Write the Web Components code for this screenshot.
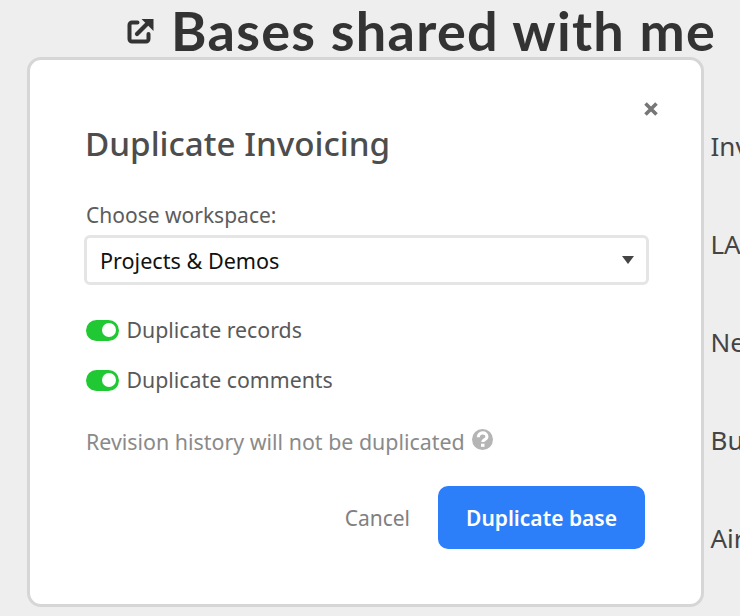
<!DOCTYPE html>
<html>
<head>
<meta charset="utf-8">
<style>
  html, body { margin: 0; height: 100%; overflow: hidden; background: #eeeeee; }
</style>
</head>
<body>
<shared-page>
  <base-row>Inv</base-row>
  <base-row>LA</base-row>
  <base-row>Ne</base-row>
  <base-row>Bu</base-row>
  <base-row>Air</base-row>
  <duplicate-dialog slot="dialog" name="Invoicing" workspace="Projects &amp; Demos"></duplicate-dialog>
</shared-page>

<script>
class SharedPage extends HTMLElement {
  constructor() {
    super();
    this.shadowDOM = this.attachShadow({ mode: "open" });
  }

  connectedCallback() {
    this.shadowDOM.innerHTML = `
      <style>
        :host {
          display: block;
          position: relative;
          width: 740px;
          height: 616px;
          overflow: hidden;
          background: #eeeeee;
          color: #333333;
        }
        header {
          display: flex;
          align-items: center;
          height: 61px;
          padding-left: 126px;
          white-space: nowrap;
        }
        header svg { flex: none; margin-right: 17px; }
        h1 {
          margin: 0;
          font: 700 54px/61px Lato, "Noto Sans", sans-serif;
          letter-spacing: 1.3px;
          color: #333333;
        }
        .list {
          display: flex;
          flex-direction: column;
          padding: 66px 0 0 710.500px;
          gap: 60px;
          white-space: nowrap;
        }
      </style>
      <header>
        <svg width="28" height="28" viewBox="0 0 28 28" fill="none" stroke="#333" stroke-width="4">
          <path d="M11.500 5.500H6A2.500 2.500 0 0 0 3.500 8V22A2.500 2.500 0 0 0 6 24.500H20A2.500 2.500 0 0 0 22.500 22V17" stroke-linecap="round"/>
          <path d="M11 17L20.500 7.500" stroke-width="4.200" stroke-linecap="round"/>
          <path d="M15.500 2H27.500V14Z" fill="#333" stroke="none"/>
        </svg>
        <h1>Bases shared with me</h1>
      </header>
      <div class="list"><slot></slot></div>
      <slot name="dialog"></slot>
    `;
  }
}

class BaseRow extends HTMLElement {
  constructor() {
    super();
    this.shadowDOM = this.attachShadow({ mode: "open" });
  }

  connectedCallback() {
    this.shadowDOM.innerHTML = `
      <style>
        :host {
          display: block;
          font: 400 26px/38px "Noto Sans", "Open Sans", sans-serif;
          color: #444444;
        }
      </style>
      <slot></slot>
    `;
  }
}

class ToggleRow extends HTMLElement {
  constructor() {
    super();
    this.shadowDOM = this.attachShadow({ mode: "open" });
  }

  connectedCallback() {
    this.shadowDOM.innerHTML = `
      <style>
        :host {
          display: flex;
          align-items: center;
          gap: 7.500px;
          height: 30px;
          font: 400 21.300px/30px "Noto Sans", "Open Sans", sans-serif;
          color: #595959;
        }
        .track {
          display: flex;
          justify-content: flex-end;
          align-items: center;
          box-sizing: border-box;
          width: 33px;
          height: 21px;
          padding-right: 3px;
          border-radius: 11px;
          background: #20c933;
        }
        .knob {
          width: 14px;
          height: 14px;
          border-radius: 50%;
          background: #ffffff;
        }
      </style>
      <span class="track"><span class="knob"></span></span>
      <slot></slot>
    `;
  }
}

class DuplicateDialog extends HTMLElement {
  constructor() {
    super();
    this.shadowDOM = this.attachShadow({ mode: "open" });
  }

  connectedCallback() {
    const name = this.getAttribute("name");
    const workspace = this.getAttribute("workspace").replace("&", "&amp;");
    this.shadowDOM.innerHTML = `
      <style>
        :host {
          position: absolute;
          left: 27px;
          top: 57px;
          box-sizing: border-box;
          width: 677px;
          height: 550px;
          padding: 61px 56px 0;
          border: 3px solid #d6d6d6;
          border-radius: 14px;
          background: #ffffff;
          font-family: "Noto Sans", "Open Sans", sans-serif;
          color: #555555;
        }
        .close {
          position: absolute;
          top: 41px;
          right: 42px;
          width: 16px;
          height: 16px;
        }
        h2 {
          margin: 0 0 33px -1px;
          font: 500 33.200px/46px "Noto Sans", "Open Sans", sans-serif;
          color: #4d4d4d;
        }
        label {
          display: block;
          font-size: 21px;
          line-height: 30px;
          margin-bottom: 5px;
          color: #5c5c5c;
        }
        .select {
          display: flex;
          align-items: center;
          justify-content: space-between;
          box-sizing: border-box;
          width: 565px;
          height: 50px;
          padding: 0 12px 0 13px;
          margin-left: -2px;
          margin-bottom: 30px;
          border: 3px solid #e5e5e5;
          border-radius: 6px;
          font-size: 21.600px;
          color: #111111;
        }
        .caret {
          width: 0;
          height: 0;
          border-left: 6.500px solid transparent;
          border-right: 6.500px solid transparent;
          border-top: 8px solid #444444;
        }
        .toggles { display: flex; flex-direction: column; gap: 20px; }
        .note {
          display: flex;
          align-items: center;
          gap: 7px;
          margin-top: 32px;
          font-size: 21.400px;
          line-height: 30px;
          color: #8a8a8a;
        }
        .actions {
          display: flex;
          justify-content: flex-end;
          align-items: center;
          gap: 28px;
          width: 559px;
          margin-top: 29px;
        }
        .cancel { font-size: 21px; color: #808080; }
        .primary {
          display: flex;
          align-items: center;
          justify-content: center;
          width: 207px;
          height: 63px;
          border-radius: 10px;
          background: #2d7ff9;
          color: #ffffff;
          font-size: 21px;
          font-weight: 600;
        }
      </style>
      <svg class="close" viewBox="0 0 16 16">
        <path d="M2.500 2.500L13.500 13.500M13.500 2.500L2.500 13.500" stroke="#777" stroke-width="3.600"/>
      </svg>
      <h2>Duplicate ${name}</h2>
      <label>Choose workspace:</label>
      <div class="select"><span>${workspace}</span><span class="caret"></span></div>
      <div class="toggles">
        <toggle-row>Duplicate records</toggle-row>
        <toggle-row>Duplicate comments</toggle-row>
      </div>
      <div class="note">
        <span>Revision history will not be duplicated</span>
        <svg width="21" height="21" viewBox="0 0 20 20" style="margin:-6px 0 0 0">
          <circle cx="10" cy="10" r="10" fill="#b5b5b5"/>
          <path d="M6 7.800C6 5.300 7.800 3.700 10.100 3.700S14.200 5.200 14.200 7.500C14.200 10.200 10.300 10 10.300 12.300" fill="none" stroke="#fff" stroke-width="3"/>
          <rect x="8.600" y="14" width="3.300" height="3" fill="#fff"/>
        </svg>
      </div>
      <div class="actions">
        <span class="cancel">Cancel</span>
        <span class="primary">Duplicate base</span>
      </div>
    `;
  }
}

customElements.define("shared-page", SharedPage);
customElements.define("base-row", BaseRow);
customElements.define("toggle-row", ToggleRow);
customElements.define("duplicate-dialog", DuplicateDialog);
</script>
</body>
</html>
